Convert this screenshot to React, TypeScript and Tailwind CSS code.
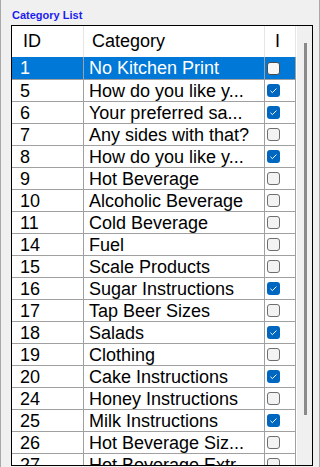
import React from 'react';

interface Row {
  id: number;
  name: string;
  checked: boolean;
}

const rows: Row[] = [
  { id: 1, name: 'No Kitchen Print', checked: false },
  { id: 5, name: 'How do you like y...', checked: true },
  { id: 6, name: 'Your preferred sa...', checked: true },
  { id: 7, name: 'Any sides with that?', checked: false },
  { id: 8, name: 'How do you like y...', checked: true },
  { id: 9, name: 'Hot Beverage', checked: false },
  { id: 10, name: 'Alcoholic Beverage', checked: false },
  { id: 11, name: 'Cold Beverage', checked: false },
  { id: 14, name: 'Fuel', checked: false },
  { id: 15, name: 'Scale Products', checked: false },
  { id: 16, name: 'Sugar Instructions', checked: true },
  { id: 17, name: 'Tap Beer Sizes', checked: false },
  { id: 18, name: 'Salads', checked: true },
  { id: 19, name: 'Clothing', checked: false },
  { id: 20, name: 'Cake Instructions', checked: true },
  { id: 24, name: 'Honey Instructions', checked: false },
  { id: 25, name: 'Milk Instructions', checked: true },
  { id: 26, name: 'Hot Beverage Siz...', checked: false },
  { id: 27, name: 'Hot Beverage Extr...', checked: false },
];

function CheckBox({ checked, selected }: { checked: boolean; selected: boolean }) {
  if (checked) {
    return (
      <div className="w-[13px] h-[13px] rounded-[3px] bg-[#0067c0] flex items-center justify-center">
        <svg width="13" height="13" viewBox="0 0 13 13">
          <path d="M3.5 6.8 L5.4 8.6 L9.4 4.6" fill="none" stroke="#ffffff" strokeWidth="1" />
        </svg>
      </div>
    );
  }
  return (
    <div
      className={
        'w-[13px] h-[13px] rounded-[3px] border ' +
        (selected ? 'border-[#4a4a4a] bg-[#f7f7f7]' : 'border-[#6e6e6e] bg-[#f3f3f3]')
      }
    />
  );
}

export default function App() {
  return (
    <div
      className="w-[320px] h-[467px] overflow-hidden bg-[#f0f0f0] border-x border-[#a8a8a8]"
      style={{ fontFamily: '"Liberation Sans", Arial, sans-serif' }}
    >
      <div className="pl-[11px] pt-[9px] h-[25px] text-[11px] font-bold leading-[13px] text-[#1c1cf0]">
        Category List
      </div>

      <div className="ml-[10px] w-[302px] h-[441px] border border-black flex overflow-hidden">
        <div className="w-[284px] flex flex-col bg-white">
          {/* header */}
          <div className="h-[31px] flex shrink-0 text-[18px] text-black">
            <div className="w-[72px] pl-[11px] flex items-center border-r border-[#e5e5e5]">ID</div>
            <div className="w-[181px] pl-[8px] flex items-center border-r border-[#e5e5e5]">Category</div>
            <div className="w-[31px] pl-[10px] flex items-center border-r border-[#e5e5e5]">I</div>
          </div>

          {rows.map((r, i) => {
            const selected = i === 0;
            return (
              <div
                key={r.id}
                className={
                  'flex shrink-0 text-[18px] border-b border-[#a0a0a0] ' +
                  (i === 0 ? 'h-[23px] ' : 'h-[22px] ') +
                  (selected ? 'bg-[#0078d7] text-white' : 'text-black')
                }
              >
                <div className="w-[72px] shrink-0 pl-[8px] flex items-center border-r border-[#a0a0a0] leading-none">
                  {r.id}
                </div>
                <div className="w-[181px] shrink-0 pl-[5px] flex items-center border-r border-[#a0a0a0] whitespace-nowrap overflow-hidden leading-none">
                  {r.name}
                </div>
                <div className="w-[31px] shrink-0 pl-[2px] flex items-center border-r border-[#a0a0a0]">
                  <CheckBox checked={r.checked} selected={selected} />
                </div>
              </div>
            );
          })}
        </div>

        {/* scrollbar */}
        <div className="w-[16px] bg-[#f0f0f0] border-l border-[#ffffff] pt-[17px] flex justify-center">
          <div className="w-[3px] h-[372px] bg-[#8a8a8a] ml-[1px]" />
        </div>
      </div>
    </div>
  );
}
